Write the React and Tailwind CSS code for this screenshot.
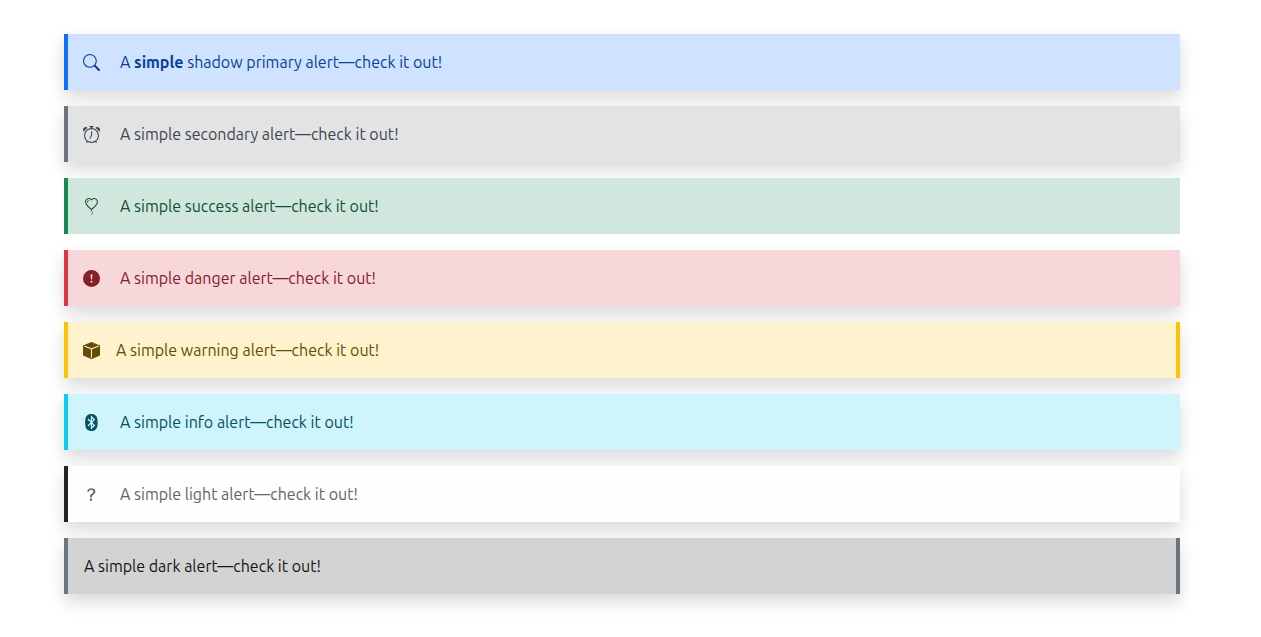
import React from 'react';
import {
  BsSearch,
  BsAlarm,
  BsBalloonHeart,
  BsExclamationCircleFill,
  BsBoxFill,
  BsBluetooth,
  BsQuestionLg
} from 'react-icons/bs';

const alerts = [
  {
    name: 'primary',
    icon: BsSearch,
    text: <>A <strong className="font-bold">simple</strong> shadow primary alert—check it out!</>,
    className: 'pl-[15px] border-l-4 border-[#0d6efd] bg-[#cfe2ff] text-[#084298] shadow-[0_8px_16px_rgba(0,0,0,0.15)]'
  },
  {
    name: 'secondary',
    icon: BsAlarm,
    text: 'A simple secondary alert—check it out!',
    className: 'pl-[15px] border-l-4 border-[#6c757d] bg-[#e2e3e5] text-[#41464b] shadow-[0_8px_16px_rgba(0,0,0,0.15)]'
  },
  {
    name: 'success',
    icon: BsBalloonHeart,
    text: 'A simple success alert—check it out!',
    className: 'pl-[15px] border-l-4 border-[#198754] bg-[#d1e7dd] text-[#0f5132]'
  },
  {
    name: 'danger',
    icon: BsExclamationCircleFill,
    text: 'A simple danger alert—check it out!',
    className: 'pl-[15px] border-l-4 border-[#dc3545] bg-[#f8d7da] text-[#842029] shadow-[0_8px_16px_rgba(0,0,0,0.15)]'
  },
  {
    name: 'warning',
    icon: BsBoxFill,
    gap: 'mr-4',
    text: 'A simple warning alert—check it out!',
    className: 'pl-[15px] border-x-4 border-[#ffc107] bg-[#fff3cd] text-[#664d03] shadow-[0_8px_16px_rgba(0,0,0,0.15)]'
  },
  {
    name: 'info',
    icon: BsBluetooth,
    text: 'A simple info alert—check it out!',
    className: 'pl-[15px] border-l-4 border-[#0dcaf0] bg-[#cff4fc] text-[#055160] shadow-[0_8px_16px_rgba(0,0,0,0.15)]'
  },
  {
    name: 'light',
    icon: BsQuestionLg,
    text: 'A simple light alert—check it out!',
    className: 'pl-[15px] border-l-4 border-[#212529] bg-[#fefefe] text-[#636464] shadow-[0_8px_16px_rgba(0,0,0,0.15)]'
  },
  {
    name: 'dark',
    text: 'A simple dark alert—check it out!',
    className: 'pl-4 border-x-4 border-[#6c757d] bg-[#d3d3d4] text-[#141619] shadow-[0_8px_16px_rgba(0,0,0,0.15)]'
  }
];

export default function App() {
  return (
    <main className="flex flex-col gap-4 pt-[34px] pb-10 pl-16 pr-[81px] font-[Ubuntu,'Noto_Sans','Open_Sans',sans-serif] text-base">
      {alerts.map(({ name, icon: Icon, gap = 'mr-5', text, className }) => (
        <div key={name} role="alert" className={`flex min-h-14 items-center pr-4 ${className}`}>
          {Icon && <Icon aria-hidden="true" className={`size-[17px] shrink-0 ${gap}`} />}
          <p>{text}</p>
        </div>
      ))}
    </main>
  );
}
